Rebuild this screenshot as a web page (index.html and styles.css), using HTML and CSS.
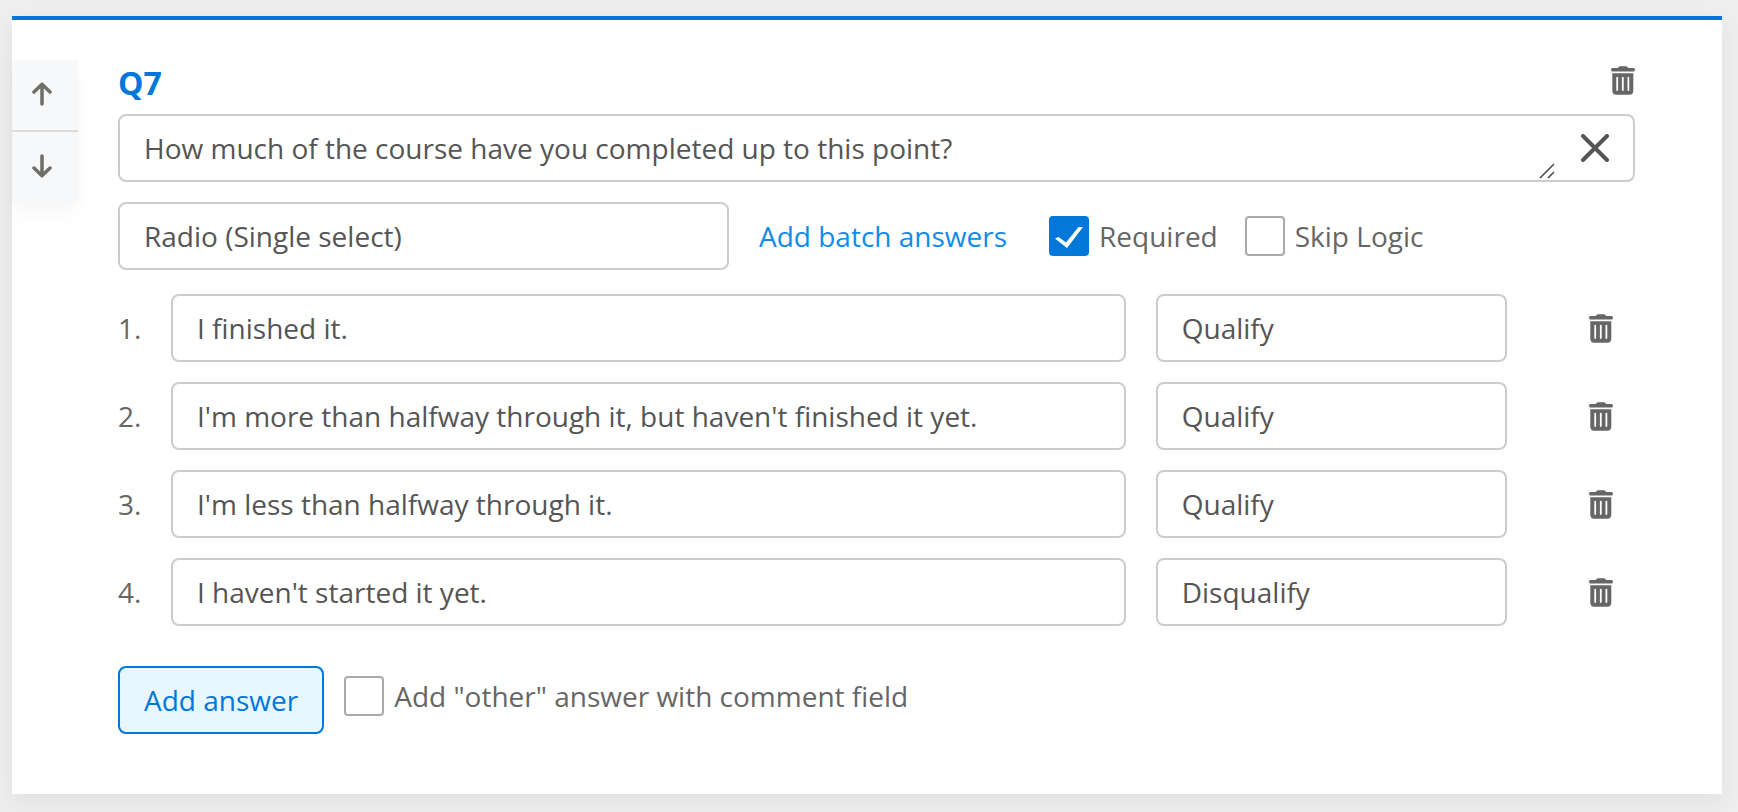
FILE: index.html
```
<!DOCTYPE html>
<html lang="en">
<head>
<meta charset="utf-8">
<title>Survey question</title>
<link rel="stylesheet" href="styles.css">
</head>
<body>
<svg class="sprite" aria-hidden="true">
  <symbol id="trash" viewBox="0 0 24 29">
    <path d="M7 2Q7.300 .3 9 .3H15Q16.700 .3 17 2H22.500Q24 2 24 3.800Q24 5.600 22.500 5.600H1.500Q0 5.600 0 3.800Q0 2 1.500 2Z"/>
    <path fill-rule="evenodd" d="M1.300 7.300H22.300V24.500Q22.300 28.700 18.300 28.700H5.300Q1.300 28.700 1.300 24.500ZM5.300 11.500V24Q5.300 25 6.200 25T7.100 24V11.500Q7.100 10.700 6.200 10.700T5.300 11.500ZM10.900 11.500V24Q10.900 25 11.800 25T12.700 24V11.500Q12.700 10.700 11.800 10.700T10.900 11.500ZM16.500 11.500V24Q16.500 25 17.400 25T18.300 24V11.500Q18.300 10.700 17.400 10.700T16.500 11.500Z"/>
  </symbol>
</svg>
<main class="card">
  <div class="mover">
    <button class="move" type="button" aria-label="Move up"><svg class="arrow" viewBox="0 0 20 24"><path d="M10 22V2.500M2 10L10 2.300L18 10"/></svg></button>
    <button class="move" type="button" aria-label="Move down"><svg class="arrow" viewBox="0 0 20 24"><path d="M10 2V21.500M2 14L10 21.700L18 14"/></svg></button>
  </div>
  <form class="question">
    <header class="head">
      <h2 class="title">Q7</h2>
      <button class="icon-button" type="button" aria-label="Delete question"><svg class="trash"><use href="#trash"/></svg></button>
    </header>
    <div class="box prompt">
      <textarea class="prompt-text" rows="1" aria-label="Question text">How much of the course have you completed up to this point?</textarea>
      <svg class="grip" viewBox="0 0 16 16" aria-hidden="true"><path d="M1 15L15 1M9 15L15 9"/></svg>
      <button class="icon-button" type="button" aria-label="Clear question"><svg class="close" viewBox="0 0 28 28"><path d="M2 2L26 26M26 2L2 26"/></svg></button>
    </div>
    <div class="settings">
      <select class="box" aria-label="Question type"><option>Radio (Single select)</option></select>
      <div class="options">
        <a class="link" href="#">Add batch answers</a>
        <label class="check"><span class="tick"><input type="checkbox" checked><svg class="mark" viewBox="0 0 40 40"><path d="M6 22.500L9.500 21L17 26.500L29.500 11H34L18 32Z"/></svg></span>Required</label>
        <label class="check"><span class="tick"><input type="checkbox"></span>Skip Logic</label>
      </div>
    </div>
    <div class="answers">
      <div class="answer">
        <label for="a1">1.</label><input class="box" id="a1" type="text" value="I finished it.">
        <select class="box" aria-label="Answer 1 rule"><option>Qualify</option></select>
        <button class="icon-button" type="button" aria-label="Delete answer 1"><svg class="trash"><use href="#trash"/></svg></button>
      </div>
      <div class="answer">
        <label for="a2">2.</label><input class="box" id="a2" type="text" value="I'm more than halfway through it, but haven't finished it yet.">
        <select class="box" aria-label="Answer 2 rule"><option>Qualify</option></select>
        <button class="icon-button" type="button" aria-label="Delete answer 2"><svg class="trash"><use href="#trash"/></svg></button>
      </div>
      <div class="answer">
        <label for="a3">3.</label><input class="box" id="a3" type="text" value="I'm less than halfway through it.">
        <select class="box" aria-label="Answer 3 rule"><option>Qualify</option></select>
        <button class="icon-button" type="button" aria-label="Delete answer 3"><svg class="trash"><use href="#trash"/></svg></button>
      </div>
      <div class="answer">
        <label for="a4">4.</label><input class="box" id="a4" type="text" value="I haven't started it yet.">
        <select class="box" aria-label="Answer 4 rule"><option>Disqualify</option></select>
        <button class="icon-button" type="button" aria-label="Delete answer 4"><svg class="trash"><use href="#trash"/></svg></button>
      </div>
    </div>
    <footer class="foot">
      <button class="box add" type="button">Add answer</button>
      <label class="check"><span class="tick"><input type="checkbox"></span>Add "other" answer with comment field</label>
    </footer>
  </form>
</main>
</body>
</html>
```
FILE: styles.css
```
* {
  box-sizing: border-box;
}

body {
  margin: 0;
  padding: 16px 16px 18px 12px;
  background: #eee;
  color: #666;
  font: 28px/38px "Open Sans", "Noto Sans", sans-serif;
}

input,
select,
textarea,
button {
  margin: 0;
  font: inherit;
  color: #555;
}

.sprite {
  display: none;
}

.card {
  display: flex;
  align-items: flex-start;
  gap: 40px;
  padding: 40px 87px 60px 0;
  border-top: 4px solid #0077d9;
  background: #fff;
  box-shadow: 0 8px 24px rgba(0, 0, 0, 0.06);
}

.mover {
  flex: none;
  width: 66px;
  background: #f7f8fa;
  box-shadow: 0 12px 16px rgba(0, 0, 0, 0.03);
}

.move {
  display: flex;
  align-items: center;
  width: 100%;
  height: 70px;
  padding: 0 0 2px 20px;
  border: 0;
  background: none;
}

.move + .move {
  height: 72px;
  border-top: 2px solid #dcdcdc;
}

.arrow {
  width: 20px;
  height: 24px;
  fill: none;
  stroke: #6f6e67;
  stroke-width: 3.5;
  stroke-linecap: round;
  stroke-linejoin: round;
}

.question {
  flex: 1;
  min-width: 0;
}

.head {
  display: flex;
  justify-content: space-between;
  align-items: flex-start;
  padding-top: 3px;
  height: 54px;
}

.title {
  margin: 0;
  color: #0077d9;
  font-size: 32px;
  line-height: 40px;
  font-weight: 700;
}

.icon-button {
  display: flex;
  padding: 0;
  border: 0;
  background: none;
}

.head .icon-button {
  padding-top: 3px;
}

.trash {
  width: 24px;
  height: 29px;
  fill: #666;
}

.box {
  width: 100%;
  min-width: 0;
  height: 68px;
  padding: 0 24px;
  border: 2px solid #ccc;
  border-radius: 8px;
  background: #fff;
  appearance: none;
}

.prompt {
  display: flex;
  align-items: center;
}

.prompt-text {
  flex: 1;
  min-width: 0;
  height: 38px;
  padding: 0;
  border: 0;
  resize: none;
  overflow: hidden;
  background: none;
}

.grip {
  align-self: flex-end;
  width: 16px;
  height: 16px;
  margin: 0 26px 1px 0;
  fill: none;
  stroke: #444;
  stroke-width: 1.5;
}

.close {
  width: 28px;
  height: 28px;
  fill: none;
  stroke: #555;
  stroke-width: 4;
  stroke-linecap: round;
}

.settings {
  display: grid;
  grid-template-columns: 611fr 876fr;
  gap: 30px;
  align-items: center;
  margin: 20px 0 24px;
}

.options {
  display: flex;
  align-items: center;
}

.link {
  margin-right: 42px;
  color: #0f8bea;
  text-decoration: none;
}

.check {
  display: flex;
  align-items: center;
  gap: 10px;
}

.check + .check {
  margin-left: 27px;
}

.tick {
  display: grid;
  width: 40px;
  height: 40px;
}

.tick > * {
  grid-area: 1 / 1;
  width: 40px;
  height: 40px;
}

.tick input {
  appearance: none;
  border: 2px solid #aaa;
  border-radius: 4px;
  background: #fff;
}

.tick input:checked {
  border-color: #0077d9;
  background: #0077d9;
}

.mark {
  pointer-events: none;
  fill: #fff;
}

.answers {
  display: grid;
  gap: 20px;
}

.answer {
  display: grid;
  grid-template-columns: 23px 954fr 351fr 76px;
  column-gap: 30px;
  align-items: center;
  padding-right: 22px;
}

.answer .icon-button {
  justify-self: end;
}

.foot {
  display: flex;
  align-items: flex-start;
  gap: 20px;
  margin-top: 40px;
}

.foot .check {
  padding-top: 10px;
}

.add {
  width: auto;
  border-color: #0077d9;
  background: #e8f6ff;
  color: #0077d9;
}
```
